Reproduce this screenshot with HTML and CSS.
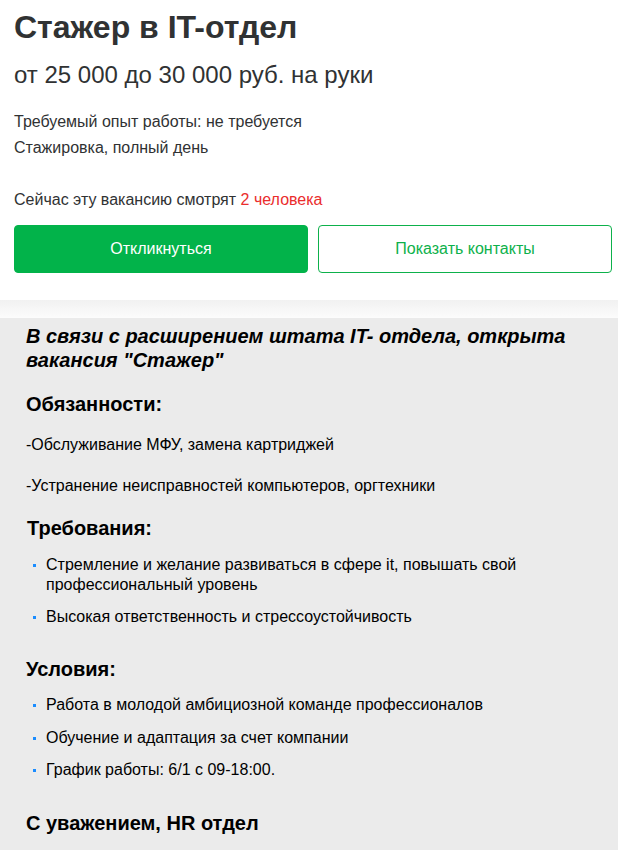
FILE: index.html
```html
<!DOCTYPE html>
<html lang="ru">
<head>
<meta charset="utf-8">
<title>Стажер в IT-отдел</title>
<link rel="stylesheet" href="styles.css">
</head>
<body>
<section class="top">
  <h1 class="title">Стажер в IT-отдел</h1>
  <p class="salary">от 25 000 до 30 000 руб. на руки</p>
  <p class="info first">Требуемый опыт работы: не требуется</p>
  <p class="info">Стажировка, полный день</p>
  <p class="info viewers">Сейчас эту вакансию смотрят <span class="count">2 человека</span></p>
  <div class="actions">
    <button class="btn btn-primary">Откликнуться</button>
    <button class="btn btn-outline">Показать контакты</button>
  </div>
</section>
<div class="band"></div>
<section class="desc">
  <h2 class="lead">В связи с расширением штата IT- отдела, открыта вакансия "Стажер"</h2>
  <h3 class="sub duties">Обязанности:</h3>
  <p class="line l1">-Обслуживание МФУ, замена картриджей</p>
  <p class="line l2">-Устранение неисправностей компьютеров, оргтехники</p>
  <h3 class="sub req">Требования:</h3>
  <ul class="list req-list">
    <li>Стремление и желание развиваться в сфере it, повышать свой профессиональный уровень</li>
    <li>Высокая ответственность и стрессоустойчивость</li>
  </ul>
  <h3 class="sub cond">Условия:</h3>
  <ul class="list cond-list">
    <li>Работа в молодой амбициозной команде профессионалов</li>
    <li>Обучение и адаптация за счет компании</li>
    <li>График работы: 6/1 с 09-18:00.</li>
  </ul>
  <h3 class="sub regards">С уважением, HR отдел</h3>
</section>
</body>
</html>
```
FILE: styles.css
```css
html, body {
  margin: 0;
  padding: 0;
  background: #ebebeb;
}
body {
  font-family: "Liberation Sans", Arial, sans-serif;
  color: #232729;
}
p, h1, h2, h3, ul { margin: 0; padding: 0; }

.top {
  background: #fff;
  padding: 9px 6px 27px 14px;
}
.title {
  font-size: 32px;
  line-height: 36px;
  font-weight: bold;
  color: #303233;
}
.salary {
  margin-top: 16px;
  font-size: 24px;
  line-height: 28px;
  color: #303233;
}
.info {
  font-size: 16px;
  line-height: 26px;
  color: #303233;
}
.info.first { margin-top: 20px; }
.info.viewers { margin-top: 26px; }
.count { color: #ea2d2d; }

.actions {
  margin-top: 12px;
  display: grid;
  grid-template-columns: 1fr 1fr;
  gap: 10px;
}
.btn {
  height: 48px;
  border-radius: 4px;
  font-family: "Liberation Sans", Arial, sans-serif;
  font-size: 16px;
  cursor: pointer;
}
.btn-primary {
  background: #02b34a;
  border: 1px solid #02b34a;
  color: #fff;
}
.btn-outline {
  background: #fff;
  border: 1px solid #0db14b;
  color: #0db14b;
}

.band {
  height: 18px;
  background: linear-gradient(#f1f1f1, #fcfcfc);
}

.desc {
  background: #ebebeb;
  padding: 6px 14px 30px 26px;
  color: #000;
}
.lead {
  font-size: 20px;
  line-height: 24px;
  font-style: italic;
  font-weight: bold;
}
.sub {
  font-size: 20px;
  line-height: 24px;
  font-weight: bold;
}
.sub.duties { margin-top: 20px; }
.sub.req { margin-top: 20px; margin-left: 1px; }
.sub.cond { margin-top: 30px; }
.sub.regards { margin-top: 31px; }

.line {
  font-size: 16px;
  line-height: 20px;
}
.line.l1 { margin-top: 19px; }
.line.l2 { margin-top: 21px; }

.list {
  list-style: none;
  font-size: 16px;
  line-height: 20px;
  padding-left: 20px;
}
.list li {
  position: relative;
  margin-top: 12px;
}
.list li::before {
  content: "";
  position: absolute;
  left: -13px;
  top: 9px;
  width: 3px;
  height: 3px;
  background: #1a8cff;
}
.req-list { margin-top: 15px; }
.req-list li:first-child { margin-top: 0; }
.cond-list { margin-top: 14px; }
.cond-list li:first-child { margin-top: 0; }
.cond-list li:nth-child(2) { margin-top: 13px; }
```
